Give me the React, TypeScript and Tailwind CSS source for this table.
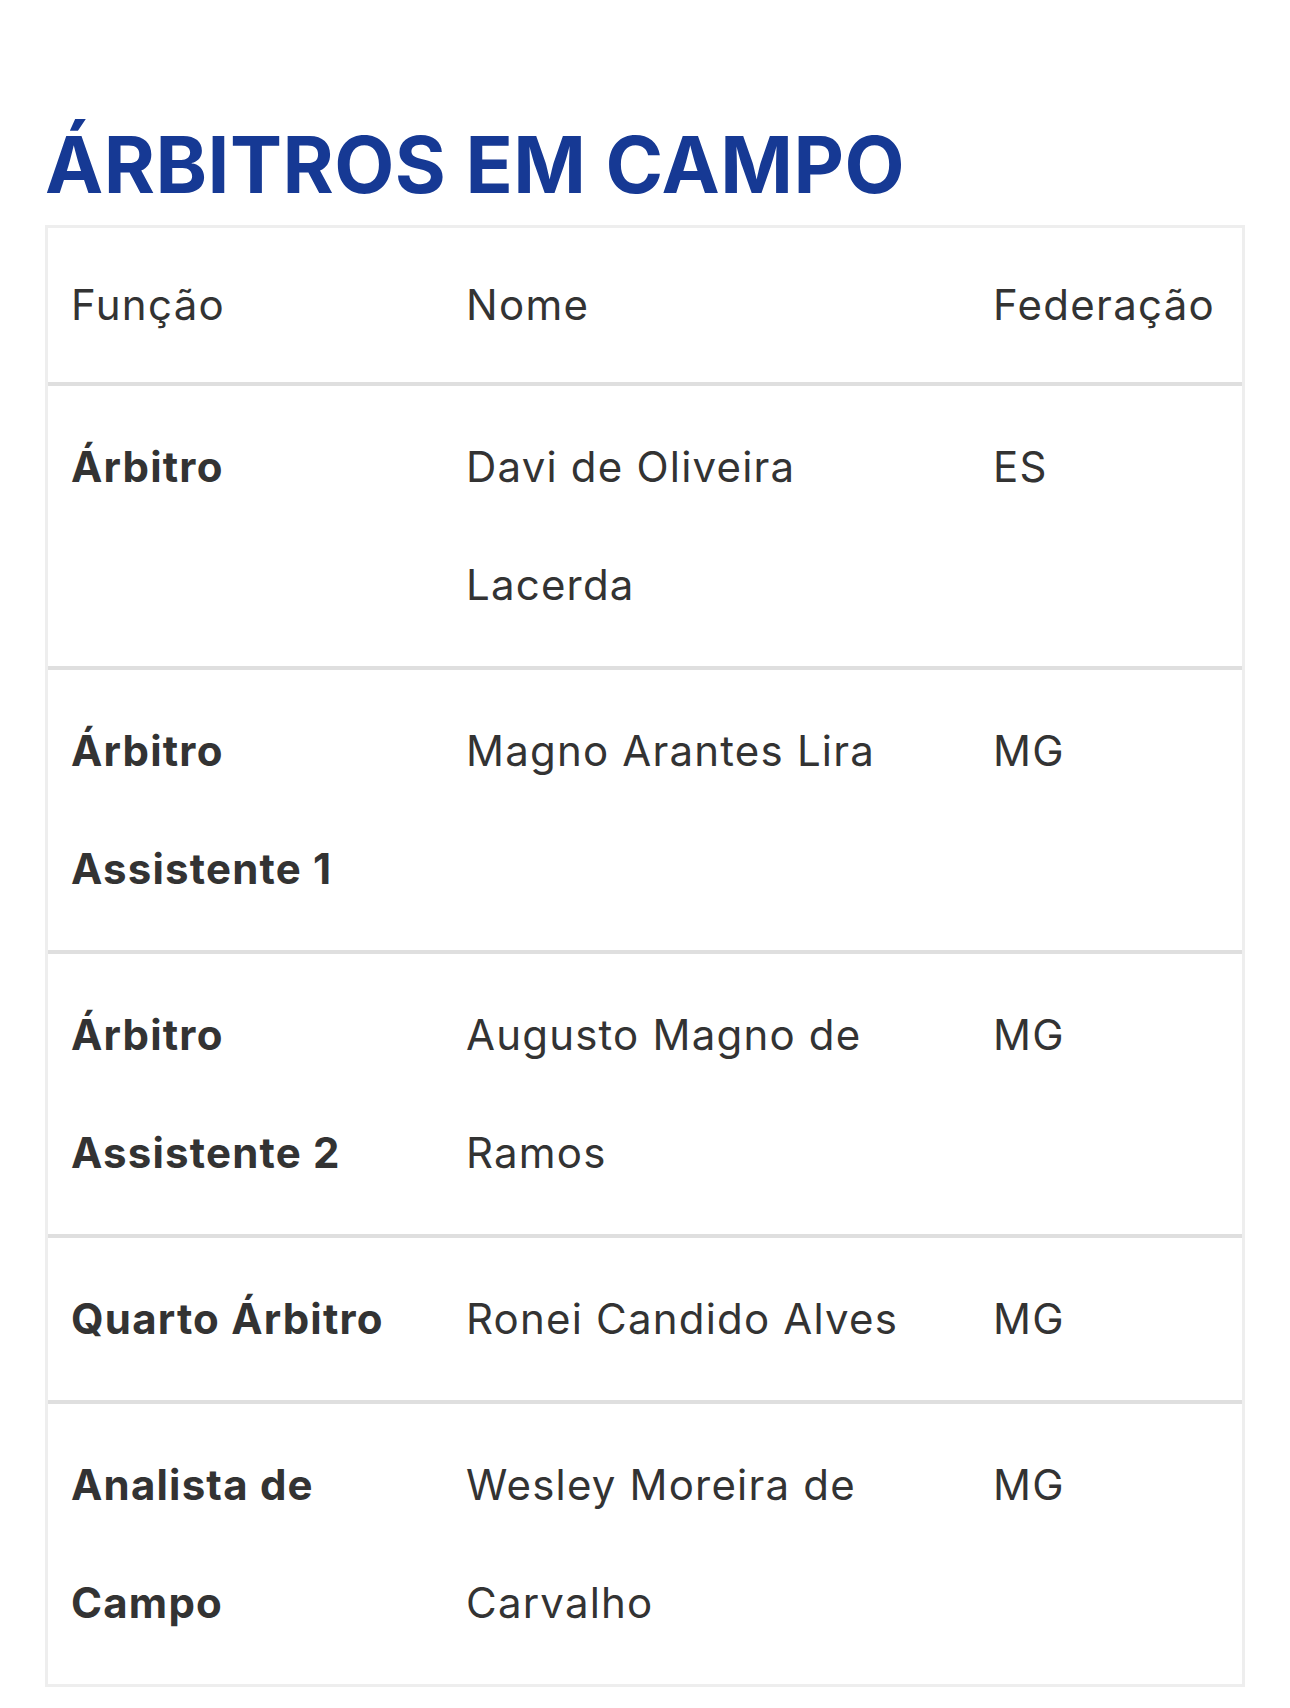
const rows = [
  { role: ["Árbitro"], name: ["Davi de Oliveira", "Lacerda"], fed: "ES" },
  { role: ["Árbitro", "Assistente 1"], name: ["Magno Arantes Lira"], fed: "MG" },
  { role: ["Árbitro", "Assistente 2"], name: ["Augusto Magno de", "Ramos"], fed: "MG" },
  { role: ["Quarto Árbitro"], name: ["Ronei Candido Alves"], fed: "MG" },
  { role: ["Analista de", "Campo"], name: ["Wesley Moreira de", "Carvalho"], fed: "MG" },
];

const Lines = ({ items }: { items: string[] }) => (
  <>
    {items.map((t) => (
      <div key={t}>{t}</div>
    ))}
  </>
);

export default function App() {
  return (
    <div className="min-h-screen bg-white px-[45px] pt-[118px] font-['Inter',sans-serif] text-[#333333]">
      <h2 className="mb-[13px] text-[78px] font-bold leading-[94px] tracking-[0.5px] text-[#163994]">
        ÁRBITROS EM CAMPO
      </h2>

      <div className="border-[3px] border-[#eeeeee]">
        <div className="grid grid-cols-[395px_527px_1fr] border-b-4 border-[#dfdfdf] text-[42px] leading-[118px] tracking-[1.3px]">
          <div className="px-[23px] py-[18px]">Função</div>
          <div className="px-[23px] py-[18px]">Nome</div>
          <div className="px-[23px] py-[18px]">Federação</div>
        </div>

        {rows.map((row, i) => (
          <div
            key={i}
            className={
              i < rows.length - 1
                ? "grid grid-cols-[395px_527px_1fr] border-b-4 border-[#dfdfdf] text-[42px] leading-[118px] tracking-[1.2px]"
                : "grid grid-cols-[395px_527px_1fr] text-[42px] leading-[118px] tracking-[1.2px]"
            }
          >
            <div className="px-[23px] py-[22px] font-bold">
              <Lines items={row.role} />
            </div>
            <div className="px-[23px] py-[22px]">
              <Lines items={row.name} />
            </div>
            <div className="px-[23px] py-[22px]">{row.fed}</div>
          </div>
        ))}
      </div>
    </div>
  );
}
